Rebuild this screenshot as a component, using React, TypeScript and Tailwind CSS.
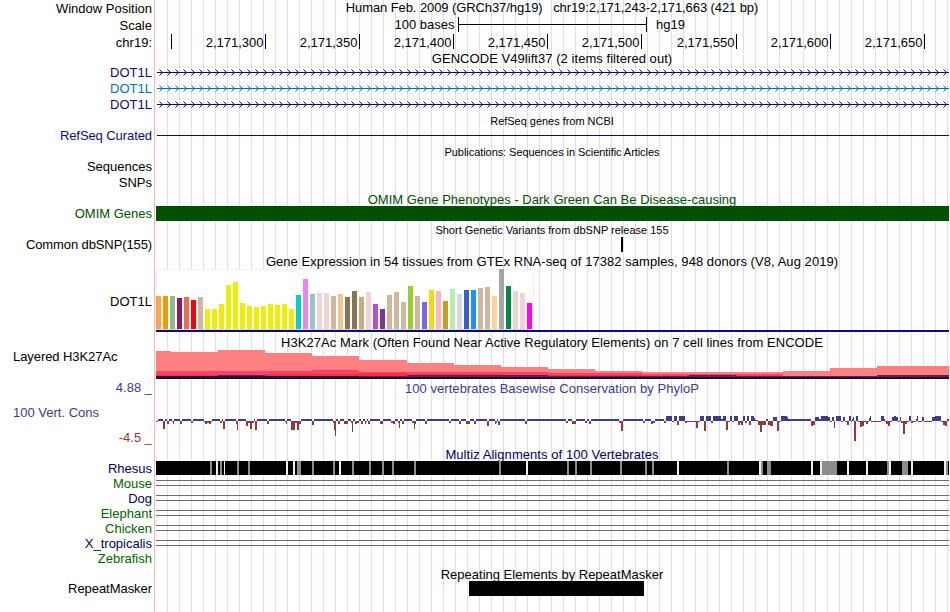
import type { ReactNode } from "react";

type Bar = [x: number, width: number, height: number];

// Genome x coordinates are kept in page pixels, the track canvas starts at 155
const ORIGIN = 155;
const WIDTH = 794;

const ticks = [
    { x: 171, label: "" },
    { x: 265, label: "2,171,300" },
    { x: 359, label: "2,171,350" },
    { x: 453, label: "2,171,400" },
    { x: 547, label: "2,171,450" },
    { x: 641, label: "2,171,500" },
    { x: 736, label: "2,171,550" },
    { x: 830, label: "2,171,600" },
    { x: 924, label: "2,171,650" },
];

const tissues: [number, string][] = [
    [33, "#ffa54f"], [33, "#ee9a00"], [33, "#8fbc8f"], [31, "#8b1c62"], [32, "#ee6a50"], [29, "#ff0000"],
    [32, "#cdb79e"], [20, "#eeee00"], [20, "#eeee00"], [25, "#eeee00"], [44, "#eeee00"], [47, "#eeee00"],
    [26, "#eeee00"], [23, "#eeee00"], [22, "#eeee00"], [23, "#eeee00"], [25, "#eeee00"], [24, "#eeee00"],
    [25, "#eeee00"], [20, "#eeee00"], [34, "#00cdcd"], [50, "#ee82ee"], [35, "#9ac0cd"], [36, "#eed5d2"],
    [36, "#eed5d2"], [33, "#cdb79e"], [35, "#eec591"], [32, "#8b7355"], [38, "#8b7355"], [32, "#cdaa7d"],
    [37, "#eed5d2"], [25, "#b452cd"], [20, "#7a378b"], [34, "#cdb79e"], [37, "#cdb79e"], [27, "#cdb79e"],
    [43, "#9acd32"], [33, "#cdb79e"], [27, "#7a67ee"], [39, "#ffd700"], [38, "#ffb6c1"], [28, "#cd9b1d"],
    [40, "#b4eeb4"], [35, "#d9d9d9"], [39, "#3a5fcd"], [39, "#1e90ff"], [41, "#cdb79e"], [42, "#cdb79e"],
    [33, "#ffd39b"], [60, "#a6a6a6"], [43, "#008b45"], [38, "#eed5d2"], [36, "#eed5d2"], [26, "#ff00ff"],
];

// Layered signal, painted back to front: [start, top] steps, every layer runs down to 29
const histone: { color: string; steps: [number, number][] }[] = [
    {
        color: "#ff8080",
        steps: [[156, 1], [171, 2], [218, 0], [265, 3], [312, 6], [359, 10], [407, 13], [454, 15], [501, 17], [548, 19], [595, 21], [642, 22], [783, 21], [830, 18], [877, 16]],
    },
    {
        color: "#ff4069",
        steps: [[156, 21], [312, 20], [359, 22], [548, 23], [642, 24], [783, 26]],
    },
    {
        color: "#ff3038",
        steps: [[156, 25], [265, 24], [359, 23], [407, 24], [501, 25], [642, 26]],
    },
    {
        color: "#66204f",
        steps: [[156, 26], [218, 25], [265, 26], [407, 25], [548, 26], [642, 26], [689, 25], [736, 26], [877, 25]],
    },
    { color: "#2a1233", steps: [[156, 26], [359, 27]] },
    { color: "#180820", steps: [[156, 28]] },
];

const conserved: Bar[] = [
    [666, 6, 5], [674, 3, 5], [679, 6, 5], [700, 4, 5], [706, 5, 5], [713, 8, 5], [721, 2, 2], [723, 3, 5],
    [730, 2, 5], [734, 4, 5], [743, 2, 5], [747, 2, 5], [751, 3, 5], [754, 1, 3], [755, 3, 1], [766, 2, 2],
    [773, 4, 4], [781, 6, 5], [787, 1, 4], [788, 23, 2], [815, 4, 4], [819, 2, 2], [821, 7, 5], [828, 2, 4],
    [832, 2, 4], [836, 5, 5], [843, 2, 4], [849, 2, 5], [852, 1, 2], [853, 1, 4], [856, 2, 5], [869, 1, 3], [870, 1, 5],
    [881, 3, 5], [884, 1, 2], [892, 2, 4], [894, 2, 5], [896, 2, 4], [900, 1, 4], [909, 2, 5], [916, 1, 2],
    [917, 1, 5], [922, 2, 4], [932, 3, 4], [935, 6, 5], [947, 2, 2],
];

const accelerated: Bar[] = [
    [156, 2, 1], [163, 2, 8], [167, 2, 3], [172, 1, 1], [173, 1, 3], [180, 2, 3], [191, 2, 2], [204, 1, 1],
    [205, 2, 3], [207, 2, 2], [209, 2, 3], [211, 1, 1], [220, 2, 2], [223, 2, 8], [236, 1, 3], [237, 1, 9],
    [246, 2, 5], [248, 2, 2], [250, 2, 8], [252, 2, 2], [255, 2, 9], [267, 2, 3], [285, 1, 1], [286, 1, 3],
    [291, 4, 9], [295, 2, 2], [297, 2, 9], [299, 2, 3], [312, 2, 4], [333, 1, 2], [334, 1, 9], [335, 1, 15],
    [338, 2, 3], [344, 4, 3], [351, 1, 2], [352, 1, 11], [355, 2, 3], [357, 2, 2], [361, 2, 3], [365, 1, 3],
    [366, 1, 1], [368, 2, 3], [380, 3, 3], [391, 2, 2], [393, 2, 3], [398, 1, 2], [399, 1, 7], [402, 2, 3],
    [412, 2, 2], [414, 1, 8], [415, 1, 3], [425, 2, 3], [449, 2, 2], [459, 2, 3], [466, 4, 3], [474, 2, 3],
    [487, 2, 5], [495, 1, 3], [496, 1, 2], [498, 2, 4], [525, 2, 3], [566, 2, 2], [572, 4, 3], [585, 2, 2],
    [589, 2, 3], [619, 2, 2], [621, 2, 10], [643, 2, 2], [651, 2, 3], [653, 2, 2], [664, 2, 2], [672, 2, 1],
    [677, 2, 4], [685, 2, 2], [687, 9, 1], [696, 2, 7], [698, 2, 1], [704, 2, 10], [711, 2, 2], [726, 2, 9],
    [728, 2, 1], [732, 2, 1], [738, 2, 4], [740, 1, 2], [741, 2, 4], [745, 2, 2], [749, 2, 4], [758, 2, 4],
    [760, 2, 11], [762, 4, 4], [768, 2, 4], [770, 3, 5], [777, 2, 10], [779, 2, 1], [811, 2, 5], [813, 2, 4],
    [830, 2, 1], [834, 1, 7], [841, 2, 1], [845, 2, 1], [847, 2, 4], [851, 1, 1], [854, 2, 20], [858, 2, 1],
    [860, 2, 6], [862, 2, 5], [864, 2, 1], [866, 2, 3], [868, 1, 1], [871, 10, 1], [885, 1, 1], [886, 2, 3],
    [888, 2, 5], [890, 2, 1], [898, 2, 1], [901, 2, 2], [903, 2, 13], [905, 2, 3], [907, 2, 1], [911, 2, 2],
    [913, 3, 1], [918, 4, 1], [924, 8, 1], [941, 2, 1], [943, 2, 4], [945, 2, 5],
];

// Left of 666 the score is a flat positive line broken up by the negative bars
const neutral = accelerated
    .filter(([x]) => x < 666)
    .map(([x, w], i, all): Bar => [x + w, (all[i + 1]?.[0] ?? 666) - x - w, 2])
    .filter(([, w]) => w > 0);

const mismatches: [number, number][] = [
    [210, 2], [220, 2], [237, 2], [248, 2], [297, 4], [312, 2], [333, 2], [352, 2], [369, 2], [382, 2],
    [392, 2], [414, 2], [499, 2], [567, 2], [575, 2], [590, 2], [620, 2], [645, 2], [652, 2], [727, 2],
    [761, 2], [767, 4], [822, 15], [887, 2], [902, 6], [946, 2],
];

const unaligned: [number, number][] = [
    [216, 2], [224, 1], [286, 2], [293, 2], [339, 2], [526, 2], [677, 2], [759, 2], [811, 2], [820, 2],
    [847, 2], [866, 2], [889, 2], [911, 2], [944, 2],
];

const species = [
    { name: "Mouse", color: "text-[#006400]" },
    { name: "Dog", color: "text-[#000064]" },
    { name: "Elephant", color: "text-[#006400]" },
    { name: "Chicken", color: "text-[#006400]" },
    { name: "X_tropicalis", color: "text-[#000064]" },
];

const Label = ({ children, className = "" }: { children?: ReactNode; className?: string }) => (
    <div className={`flex w-[152px] shrink-0 items-center justify-end whitespace-pre ${className}`}>{children}</div>
);

const Row = ({ label, height, color, children }: { label?: string; height: string; color?: string; children?: ReactNode }) => (
    <div className={`flex ${height}`}>
        <Label className={color}>{label}</Label>
        <div className="ml-[3px] w-[794px] shrink-0">{children}</div>
    </div>
);

const Title = ({ children, className = "" }: { children: ReactNode; className?: string }) => (
    <div className={`ml-[155px] flex w-[794px] items-center justify-center whitespace-pre ${className}`}>{children}</div>
);

const Canvas = ({ height, children }: { height: number; children: ReactNode }) => (
    <svg
        className="block"
        width={WIDTH}
        height={height}
        viewBox={`${ORIGIN} 0 ${WIDTH} ${height}`}
        shapeRendering="crispEdges"
    >
        {children}
    </svg>
);

const Gene = ({ color }: { color: string }) => (
    <Canvas height={16}>
        <rect x={157} y={8} width={792} height={1} fill={color} />
        {Array.from({ length: 99 }, (_, i) => 162 + i * 8).map((x) => (
            <path
                key={x}
                d={`M${x - 2.5} 5.5 L${x + 0.5} 8.5 L${x - 2.5} 11.5`}
                fill="none"
                stroke={color}
                strokeWidth={1}
                shapeRendering="auto"
            />
        ))}
    </Canvas>
);

const Ruler = () => (
    <Canvas height={17}>
        {ticks.map(({ x, label }) => (
            <g key={x}>
                <rect x={x} y={0} width={1} height={15} />
                <text x={x - 1.5} y={13} textAnchor="end">
                    {label}
                </text>
            </g>
        ))}
    </Canvas>
);

const ScaleBar = () => (
    <Canvas height={17}>
        <text x={454.5} y={12} textAnchor="end">100 bases</text>
        <rect x={458} y={0} width={1} height={15} />
        <rect x={458} y={7} width={188} height={1} />
        <rect x={646} y={0} width={1} height={15} />
        <text x={656} y={12}>hg19</text>
    </Canvas>
);

const Expression = () => (
    <Canvas height={63}>
        <rect x={156} y={0} width={378} height={61} fill="#f2f2f2" />
        <rect x={157} y={1} width={376} height={59} fill="#ffffff" />
        <rect x={156} y={60} width={378} height={1} fill="#d9d9d9" />
        {tissues.map(([h, color], i) => (
            <rect key={i} x={156 + i * 7} y={60 - h} width={5} height={h} fill={color} />
        ))}
        <rect x={156} y={61} width={793} height={2} fill="#0c0c78" />
    </Canvas>
);

const Histone = () => (
    <Canvas height={29}>
        {histone.map(({ color, steps }) =>
            steps.map(([x, top], i) => {
                const end = i + 1 < steps.length ? steps[i + 1][0] : 949;
                return <rect key={`${color}-${x}`} x={x} y={top} width={end - x} height={29 - top} fill={color} />;
            })
        )}
    </Canvas>
);

const Conservation = () => (
    <Canvas height={50}>
        {[...neutral, ...conserved].map(([x, w, h]) => (
            <rect key={x} x={x} y={25 - h} width={w} height={h} fill="#3c3c8c" />
        ))}
        {accelerated.map(([x, w, h]) => (
            <rect key={x} x={x} y={25} width={w} height={h} fill="#8c3c3c" />
        ))}
    </Canvas>
);

const Rhesus = () => (
    <Canvas height={15}>
        <rect x={156} y={0} width={793} height={14} fill="#000000" />
        {mismatches.map(([x, w]) => (
            <rect key={x} x={x} y={0} width={w} height={14} fill="#8c8c8c" />
        ))}
        {unaligned.map(([x, w]) => (
            <rect key={x} x={x} y={0} width={w} height={14} fill="#eeeeee" />
        ))}
    </Canvas>
);

const App = () => {
    return (
        <div className="h-[612px] w-[950px] overflow-hidden bg-white">
            <main className="h-full w-[949px] bg-[linear-gradient(to_right,#dcdcff_1px,transparent_1px)] bg-[length:12px_100%] bg-[position:11px_0] font-['Liberation_Sans',Arial,sans-serif] text-[13px] leading-none text-black">
                <div className="h-full bg-[linear-gradient(to_right,#ffffff_154px,#ffb4b4_154px,#ffb4b4_155px,#ffffff_155px,#ffffff_156px,transparent_156px)]">
                    <Row label="Window Position" height="h-[17px]">
                        <div className="flex h-[15px] items-center justify-center whitespace-pre tracking-[-0.09px]">{"Human Feb. 2009 (GRCh37/hg19)   chr19:2,171,243-2,171,663 (421 bp)"}</div>
                    </Row>
                    <Row label="Scale" height="h-[17px]"><ScaleBar /></Row>
                    <Row label="chr19:" height="h-[17px]"><Ruler /></Row>
                    <Title className="h-[13px] pt-[2px] tracking-[0.05px]">GENCODE V49lift37 (2 items filtered out)</Title>
                    <Row label="DOT1L" height="h-4" color="text-[#0c0c78]"><Gene color="#0c0c78" /></Row>
                    <Row label="DOT1L" height="h-4" color="text-[#0072b4]"><Gene color="#0072b4" /></Row>
                    <Row label="DOT1L" height="h-4" color="text-[#0c0c78]"><Gene color="#0c0c78" /></Row>

                    <Title className="h-[15px] pt-1 text-[11px] tracking-[-0.03px]">RefSeq genes from NCBI</Title>
                    <Row label="RefSeq Curated" height="h-4" color="text-[#0c0c78] tracking-[-0.08px]">
                        <Canvas height={16}><rect x={157} y={8} width={792} height={1} fill="#0c0c78" /></Canvas>
                    </Row>
                    <Title className="h-4 pt-[3px] text-[11px] tracking-[-0.06px]">Publications: Sequences in Scientific Articles</Title>
                    <Row label="Sequences" height="h-4" color="pb-[2px]" />
                    <Row label="SNPs" height="h-4" color="pb-[2px]" />

                    <Title className="h-[15px] pt-[2px] text-[#005000]">OMIM Gene Phenotypes - Dark Green Can Be Disease-causing</Title>
                    <Row label="OMIM Genes" height="h-4" color="text-[#005000] pb-[2px]">
                        <Canvas height={16}><rect x={156} y={0} width={793} height={15} fill="#005000" /></Canvas>
                    </Row>
                    <Title className="h-[15px] pt-[2px] text-[11px]">Short Genetic Variants from dbSNP release 155</Title>
                    <Row label="Common dbSNP(155)" height="h-4" color="pb-[2px] tracking-[-0.11px]">
                        <Canvas height={16}><rect x={621} y={0} width={2} height={15} /></Canvas>
                    </Row>

                    <Title className="h-4 tracking-[0.055px]">Gene Expression in 54 tissues from GTEx RNA-seq of 17382 samples, 948 donors (V8, Aug 2019)</Title>
                    <Row label="DOT1L" height="h-[63px]" color="pt-[2px]"><Expression /></Row>

                    <Title className="h-[18px] pt-[3px] tracking-[0.05px]">H3K27Ac Mark (Often Found Near Active Regulatory Elements) on 7 cell lines from ENCODE</Title>
                    <div className="flex h-[29px]">
                        <div className="w-[142px] pl-[13px] tracking-[-0.07px]">Layered H3K27Ac</div>
                        <div className="ml-[13px] w-[794px] shrink-0"><Histone /></div>
                    </div>

                    <div className="flex h-[17px] text-[#3c3c8c]">
                        <Label>4.88 _</Label>
                        <div className="ml-[3px] flex w-[794px] shrink-0 items-center justify-center pt-[2px] tracking-[0.04px]">100 vertebrates Basewise Conservation by PhyloP</div>
                    </div>
                    <div className="flex h-[50px]">
                        <div className="flex w-[152px] shrink-0 flex-col justify-between pt-[10px] pb-[2px] text-[#3c3c8c]">
                            <span className="pl-[13px]">100 Vert. Cons</span>
                            <span className="text-right text-[#8c3c3c]">-4.5 _</span>
                        </div>
                        <div className="ml-[3px] w-[794px] shrink-0"><Conservation /></div>
                    </div>

                    <Title className="h-[15px] pt-[2px] text-[#000064] tracking-[0.06px]">Multiz Alignments of 100 Vertebrates</Title>
                    <Row label="Rhesus" height="h-[15px]" color="text-[#000064]"><Rhesus /></Row>
                    {species.map(({ name, color }) => (
                        <Row key={name} label={name} height="h-[15px]" color={color}>
                            <Canvas height={15}>
                                <rect x={156} y={4} width={793} height={1} fill="#6e6e6e" />
                                <rect x={156} y={9} width={793} height={1} fill="#6e6e6e" />
                            </Canvas>
                        </Row>
                    ))}
                    <Row label="Zebrafish" height="h-[15px]" color="text-[#006400]" />

                    <Title className="h-[15px] pt-[2px]">Repeating Elements by RepeatMasker</Title>
                    <Row label="RepeatMasker" height="h-4" color="pb-[2px] tracking-[-0.05px]">
                        <Canvas height={16}><rect x={469} y={0} width={175} height={15} /></Canvas>
                    </Row>
                </div>
            </main>
        </div>
    );
};

export default App;
